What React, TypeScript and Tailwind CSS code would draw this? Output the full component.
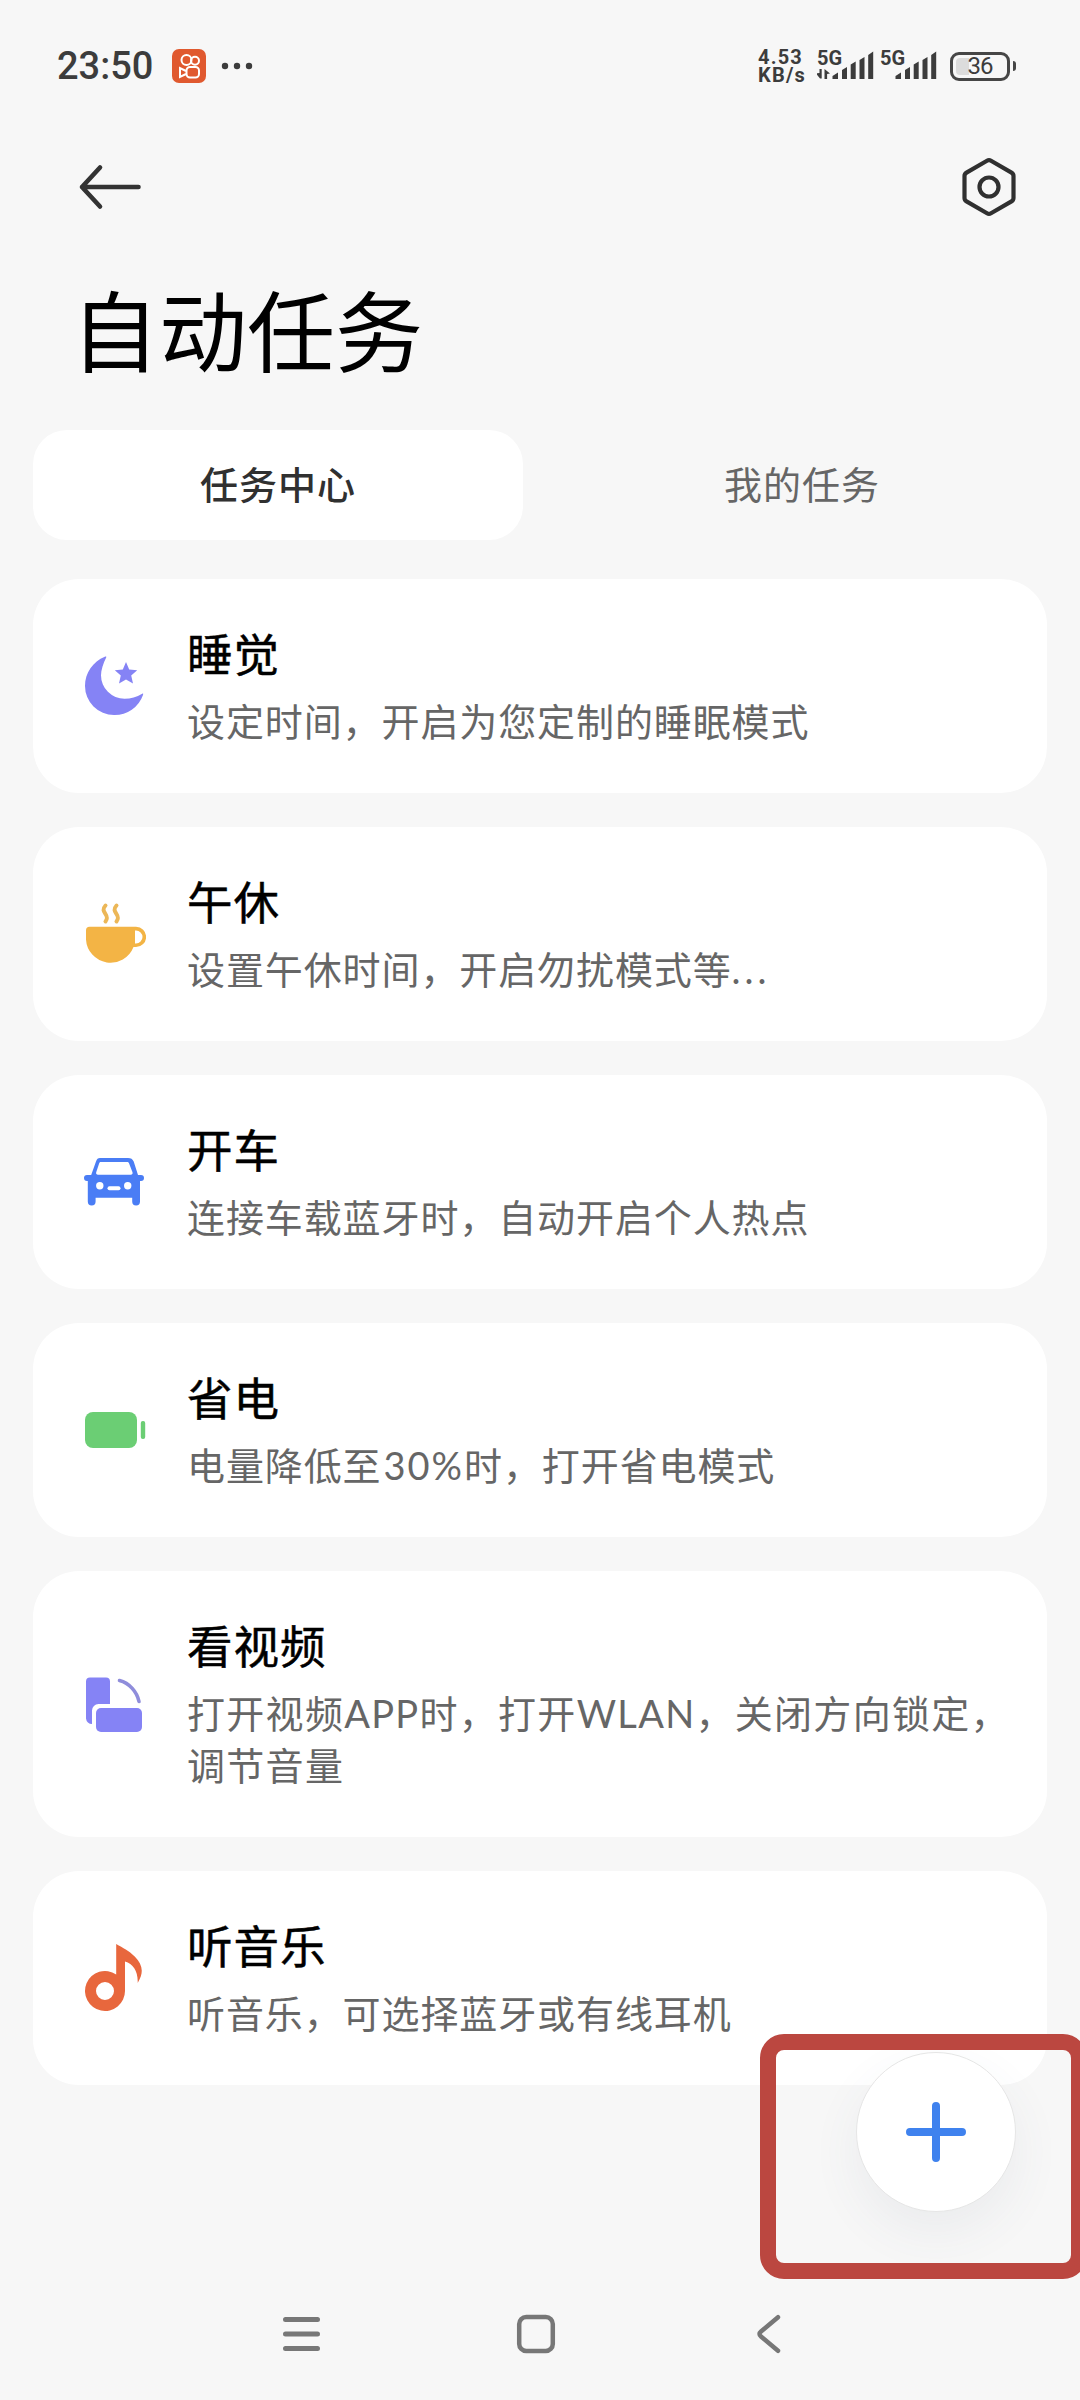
import type { ReactNode } from "react";

type Task = {
  title: string;
  description: ReactNode;
  icon: ReactNode;
};

function MoonIcon() {
  return (
    <svg width="64" height="72" viewBox="82 650 64 72" fill="#8583f5">
      <path d="M106.2 657.4c-3 6-5.200 12.500-5.200 17.800a23.500 23.500 0 0 0 23.500 23.500c6.500 0 12-1.600 17.700-5 1-.6 1.200.2.800 1.200A30 30 0 0 1 114 715 29 29 0 0 1 85 686c0-13 8-24.500 19.800-29.200 1.100-.4 1.800-.2 1.400.6z" />
      <path d="M126 662l3.200 7.400 8 .8-6 5.400 1.800 8-7-4.100-7 4.100 1.800-8-6-5.400 8-.8z" />
    </svg>
  );
}

function CupIcon() {
  return (
    <svg width="64" height="72" viewBox="82 898 64 72" fill="none">
      <path
        d="M89.500 926.800h46.500a10 10 0 0 1 0 20.200h-2.500A24.600 24.600 0 0 1 86 939.500v-9.200a3.500 3.500 0 0 1 3.500-3.500zM135 930.500v13h1a6.500 6.500 0 0 0 0-13z"
        fill="#f3b445"
        fillRule="evenodd"
      />
      <path
        d="M105.500 905.500c-6.500 7 5.500 9 0 16M116.500 905.500c-6.500 7 5.500 9 0 16"
        stroke="#ecb757"
        strokeWidth="4"
        strokeLinecap="round"
      />
    </svg>
  );
}

function CarIcon() {
  return (
    <svg width="64" height="72" viewBox="82 1146 64 72">
      <path
        d="M100 1158h28c3 0 4.500 1 5.700 3.500l4.300 13.500h3a3 3 0 0 1 0 6h-1v20.500a3.900 3.900 0 0 1-7.800 0v-3.800H95.600v3.800a3.900 3.900 0 0 1-7.800 0v-20.500H87a3 3 0 0 1 0-6h4.200l4.800-13.500c.8-2.500 2-3.500 4-3.500z"
        fill="#4a7df5"
      />
      <path d="M101 1162h26c1 0 1.700.5 2 1.300l3.500 9c.4 1.500-.3 2.500-1.700 2.500H98c-1.500 0-2.200-1-1.800-2.500l3-9c.3-.8.900-1.300 1.800-1.300z" fill="#fff" />
      <circle cx="99.800" cy="1185.700" r="3.700" fill="#fff" />
      <circle cx="127.700" cy="1185.700" r="3.700" fill="#fff" />
      <rect x="107.500" y="1186.200" width="13" height="4" rx="2" fill="#fff" />
    </svg>
  );
}

function PowerIcon() {
  return (
    <svg width="64" height="72" viewBox="82 1394 64 72" fill="#6bce74">
      <rect x="85" y="1412" width="52" height="36" rx="8" />
      <rect x="140.800" y="1421" width="4.400" height="18" rx="2" />
    </svg>
  );
}

function RotateIcon() {
  return (
    <svg width="64" height="72" viewBox="82 1668 64 72" fill="#8583f5">
      <path d="M90 1677.500h16a4 4 0 0 1 4 4v22.500H98.500a6.500 6.500 0 0 0-6.500 6.500V1724a6 6 0 0 1-6-5.500v-37a4 4 0 0 1 4-4z" />
      <rect x="96" y="1708" width="46" height="24" rx="5" />
      <path d="M119.500 1680.500c10 2.500 17.500 11.500 19.500 21" fill="none" stroke="#8f8ddb" strokeWidth="3.600" strokeLinecap="round" />
    </svg>
  );
}

function MusicIcon() {
  return (
    <svg width="64" height="72" viewBox="82 1942 64 72">
      <path
        d="M116.200 1944c7 4 12.500 6.500 18.500 12.500 8 8.500 9.500 15.500 3 26.500.5-12-4.500-19-12.700-21.500v29.500a20 20 0 1 1-8.800-16.600zM105 1982a9 9 0 1 0 0 18 9 9 0 0 0 0-18z"
        fill="#e8673d"
        fillRule="evenodd"
      />
    </svg>
  );
}

const tasks: Task[] = [
  { title: "睡觉", description: "设定时间，开启为您定制的睡眠模式", icon: <MoonIcon /> },
  {
    title: "午休",
    description: (
      <>
        设置午休时间，开启勿扰模式等<span className="tracking-[4px]">...</span>
      </>
    ),
    icon: <CupIcon />,
  },
  { title: "开车", description: "连接车载蓝牙时，自动开启个人热点", icon: <CarIcon /> },
  {
    title: "省电",
    description: (
      <>
        电量降低至<span className="ml-0.5 tracking-[2px]">30%</span>时，打开省电模式
      </>
    ),
    icon: <PowerIcon />,
  },
  {
    title: "看视频",
    description: <span className="tracking-[1.300px]">打开视频APP时，打开WLAN，关闭方向锁定，调节音量</span>,
    icon: <RotateIcon />,
  },
  { title: "听音乐", description: "听音乐，可选择蓝牙或有线耳机", icon: <MusicIcon /> },
];

function Signal({ data = false }: { data?: boolean }) {
  return (
    <div className="relative h-[34px] w-[60px]">
      <span className="absolute top-0 left-0 text-[20px] leading-[18px] font-bold">5G</span>
      <svg className="absolute inset-0" width="60" height="34" viewBox="0 0 60 34" fill="#3c3c3c">
        {data && <path d="M-1 24.500l3.500-0.500v-4h2.200v9.500H3zM7.500 20l5.500 4.500-2.900.5v5H7.500z" />}
        <path d="M15.500 27l5.500-3.500v6.500h-5.500zM25 21l5-3v12h-5zM33.700 15.500l5-3V30h-5zM42.500 11l5-3v22h-5zM51.200 6l5-3.500V30h-5z" />
      </svg>
    </div>
  );
}

function StatusBar() {
  return (
    <div className="flex h-[132px] items-center justify-between pr-16 pl-[57px] font-['Roboto',sans-serif] text-[#3c3c3c]">
      <div className="flex items-center">
        <span className="w-[115px] text-[38px] leading-none font-medium">23:50</span>
        <svg width="34" height="34" viewBox="0 0 34 34" fill="none" stroke="#fff" strokeWidth="2">
          <rect width="34" height="34" rx="7" fill="#e0592f" stroke="none" />
          <circle cx="14.500" cy="11" r="5" />
          <circle cx="23" cy="11.800" r="4" />
          <rect x="14.500" y="18" width="12.500" height="10.500" rx="3.500" />
          <path d="M14 22l-6-3v9l6-3" />
        </svg>
        <svg className="ml-[15px]" width="32" height="8" viewBox="0 0 32 8" fill="#3c3c3c">
          <circle cx="4" cy="4" r="3.200" />
          <circle cx="16" cy="4" r="3.200" />
          <circle cx="28" cy="4" r="3.200" />
        </svg>
      </div>
      <div className="flex items-center">
        <div className="w-[59px] text-[20px] leading-[18px] font-bold tracking-[1.200px]">
          <div>4.53</div>
          <div>KB/s</div>
        </div>
        <div className="flex gap-[3px]">
          <Signal data />
          <Signal />
        </div>
        <div className="ml-[10px] flex items-center gap-[3px]">
          <div className="relative flex h-[29px] w-[60px] items-center justify-center rounded-[9px] border-3 border-[#464646] text-[24px]">
            <div className="absolute top-[3px] left-[3px] h-[17px] w-[13px] rounded-l-[4px] bg-[#dcdcdc]" />
            <span className="relative leading-none tracking-[-1px]">36</span>
          </div>
          <div className="h-[10px] w-[3px] rounded-r-sm bg-[#464646]" />
        </div>
      </div>
    </div>
  );
}

function TaskCard({ task }: { task: Task }) {
  return (
    <div className="flex items-center rounded-[46px] bg-white py-[46px] pr-[34px] pl-[49px]">
      <div className="w-[105px] shrink-0">{task.icon}</div>
      <div className="min-w-0 flex-1">
        <h2 className="-mt-px text-[45.500px] leading-[62px] tracking-[1px] text-black [-webkit-text-stroke:0.5px_#000]">
          {task.title}
        </h2>
        <p className="mt-[9px] text-[38px] leading-[52px] tracking-[0.900px] text-[#666]">{task.description}</p>
      </div>
    </div>
  );
}

export default function App() {
  return (
    <div
      className="relative flex h-[2400px] w-[1080px] flex-col overflow-hidden bg-[#f7f7f7] font-['Lato','Noto_Sans_CJK_SC',sans-serif]"
      lang="zh-CN"
    >
      <StatusBar />

      {/* Toolbar */}
      <div className="flex h-[110px] items-center justify-between pr-[62px] pl-[78px]">
        <svg width="66" height="50" viewBox="0 0 66 50" fill="none" stroke="#333" strokeWidth="4.600" strokeLinecap="round" strokeLinejoin="round">
          <path d="M60.500 25H4M22 5.500L4 25l18 19.500" />
        </svg>
        <svg width="58" height="62" viewBox="0 0 58 62" fill="none" stroke="#303030" strokeWidth="4.200" strokeLinejoin="round">
          <path d="M27 4.800q2-1.200 4 0l20.500 11.800q2 1.200 2 3.400v22q0 2.200-2 3.400L31 57.200q-2 1.200-4 0L6.500 45.400q-2-1.200-2-3.400V20q0-2.200 2-3.400z" />
          <circle cx="29" cy="31" r="9.500" />
        </svg>
      </div>

      <h1 className="mt-[29px] pl-[71px] text-[88px] leading-[120px] text-black">自动任务</h1>

      {/* Tabs */}
      <div className="mx-[33px] mt-[39px] grid h-[110px] shrink-0 grid-cols-2 gap-[34px] text-[38px] tracking-[1px]">
        <div className="flex items-center justify-center rounded-[34px] bg-white pb-0.5 font-medium text-[#303030]">任务中心</div>
        <div className="flex items-center justify-center pb-0.5 text-[#666]">我的任务</div>
      </div>

      {/* Task list */}
      <div className="mx-[33px] mt-[39px] flex flex-col gap-[34px]">
        {tasks.map((task) => (
          <TaskCard key={task.title} task={task} />
        ))}
      </div>

      {/* Add button */}
      <div className="absolute top-[2052px] left-[856px] flex size-40 items-center justify-center rounded-full border border-[#e6e6e6] bg-white shadow-[0_20px_50px_rgba(70,90,120,0.07)]">
        <svg width="60" height="60" viewBox="0 0 60 60" stroke="#3f82ee" strokeWidth="8" strokeLinecap="round">
          <path d="M30 4v52M4 30h52" />
        </svg>
      </div>
      <div className="absolute top-[2034px] left-[760px] h-[245px] w-[327px] rounded-[24px] border-16 border-[#bb4740]" />

      {/* Navigation bar */}
      <div className="mt-auto flex h-[132px] items-center pl-[281px]">
        <svg width="40" height="40" viewBox="0 0 40 40" stroke="#777" strokeWidth="5" strokeLinecap="round">
          <path d="M4.500 5.500h32M4.500 20h32M4.500 34.500h32" />
        </svg>
        <svg className="ml-[195px]" width="40" height="40" viewBox="0 0 40 40" fill="none" stroke="#777" strokeWidth="4.500">
          <rect x="3.200" y="3" width="33.600" height="34" rx="7" />
        </svg>
        <svg className="ml-[199px]" width="26" height="40" viewBox="0 0 26 40" fill="none" stroke="#777" strokeWidth="4.500" strokeLinecap="round">
          <path d="M23 3.200L6 17.500q-3 2.500 0 5L23 36.800" />
        </svg>
      </div>
    </div>
  );
}
